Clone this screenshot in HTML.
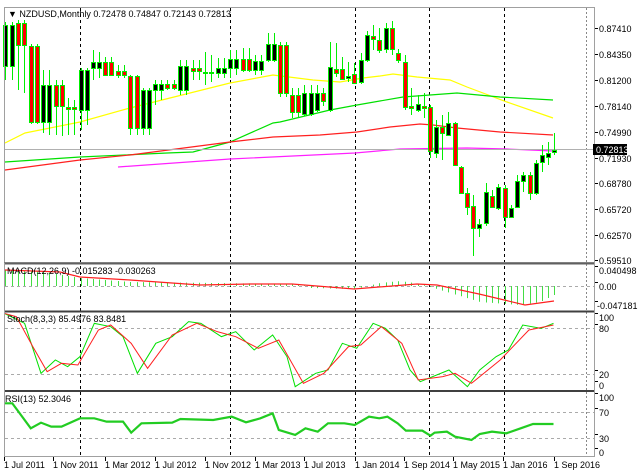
<!DOCTYPE html>
<html><head><meta charset="utf-8"><style>
html,body{margin:0;padding:0;background:#fff;width:643px;height:472px;overflow:hidden}
svg{display:block;font-family:"Liberation Sans",sans-serif}
</style></head><body>
<svg id="s" width="643" height="472" xmlns="http://www.w3.org/2000/svg">
<rect width="643" height="472" fill="#fff"/>
<!-- dashed vertical grid -->
<g stroke="#000" stroke-dasharray="3,3" stroke-width="1">
<line x1="80.5" y1="8" x2="80.5" y2="456"/><line x1="230.5" y1="8" x2="230.5" y2="456"/>
<line x1="355.5" y1="8" x2="355.5" y2="456"/><line x1="429.5" y1="8" x2="429.5" y2="456"/>
<line x1="504.5" y1="8" x2="504.5" y2="456"/>
</g>
<line x1="586.5" y1="8" x2="586.5" y2="456" stroke="#888" stroke-dasharray="2,2"/>
<!-- gray dashed horizontals in oscillators -->
<g stroke="#aaa" stroke-dasharray="3,3">
<line x1="5" y1="286.5" x2="595" y2="286.5"/>
<line x1="5" y1="328.5" x2="595" y2="328.5"/><line x1="5" y1="374.5" x2="595" y2="374.5"/>
<line x1="5" y1="412.5" x2="595" y2="412.5"/><line x1="5" y1="438.5" x2="595" y2="438.5"/>
</g>
<!-- MAs -->
<g fill="none" stroke-width="1.2">
<polyline stroke="#ffff00" points="5,143 25,133 80,122 130,108 230,83 273,75 313,80 340,82 363,78 380,76 393,74 417,77 450,80 467,87 507,102 553,118"/>
<polyline stroke="#00e000" points="5,162 80,157 167,153 193,152 230,142 273,123 280,122 330,110 357,105 403,97 430,95 457,93 500,97 553,100"/>
<polyline stroke="#ff2020" points="5,170 80,160 130,155 230,142 273,137 320,135 357,132 390,127 420,124 433,125 457,128 500,132 553,135"/>
<polyline stroke="#ff20ff" points="118,167 230,159 355,153 400,149 467,148 507,149 553,151"/>
</g>
<line x1="5" y1="149.5" x2="595" y2="149.5" stroke="#b0b0b0"/>
<g id="candles"></g>
<g id="hist" stroke="#44dd44" stroke-width="1"></g>
<polyline fill="none" stroke="#ff2020" stroke-width="1.2" points="5,270 60,272 80,277 130,280 200,285 250,284 292,284 354,289 417,284 437,285 479,294 525,305 554,301"/>
<!-- stoch -->
<g transform="translate(0,260) scale(0.41,0.3333)" fill="none">
<polyline vector-effect="non-scaling-stroke" stroke="#00e000" stroke-width="1" points="10,160 60,190 100,340 135,300 165,320 195,290 230,190 270,200 300,230 335,340 380,250 420,230 460,185 490,190 540,230 575,215 620,270 665,225 700,290 720,380 770,340 800,330 835,250 870,265 910,190 940,205 970,240 1000,330 1025,365 1095,330 1140,380 1170,330 1210,290 1240,270 1275,195 1320,205 1350,190"/>
<polyline vector-effect="non-scaling-stroke" stroke="#ff2020" stroke-width="1" points="10,160 40,170 80,260 115,335 150,310 190,315 240,210 270,195 320,250 360,325 420,225 480,190 530,215 575,230 630,265 680,240 740,370 790,340 850,260 880,255 930,200 980,250 1020,360 1080,350 1110,340 1150,370 1220,300 1290,210 1350,195"/>
<polyline vector-effect="non-scaling-stroke" stroke="#22cc22" stroke-width="2.2" points="10,430 30,430 45,455 75,505 100,488 125,500 150,500 195,475 230,475 260,485 300,485 320,518 345,490 420,488 440,477 520,480 565,470 600,487 635,475 665,460 680,510 720,525 745,505 775,515 800,490 840,490 865,495 900,470 925,475 945,470 970,490 990,512 1030,512 1050,527 1060,518 1090,515 1110,530 1150,540 1170,522 1200,515 1235,520 1270,505 1300,492 1350,492"/>
</g>
<!-- frames -->
<g fill="none">
<rect x="4.5" y="7.5" width="590" height="255" stroke="#a0a0a0"/>
<line x1="4" y1="263.5" x2="595" y2="263.5" stroke="#606060" stroke-width="2"/>
<line x1="4" y1="311.5" x2="595" y2="311.5" stroke="#404040" stroke-width="2"/>
<line x1="4" y1="391" x2="595" y2="391" stroke="#404040" stroke-width="2"/>
<line x1="4.5" y1="263" x2="4.5" y2="456" stroke="#a0a0a0"/>
<line x1="594.5" y1="7" x2="594.5" y2="456" stroke="#a0a0a0"/>
<line x1="4" y1="456.5" x2="595" y2="456.5" stroke="#a0a0a0"/>
</g>
<rect x="593" y="144" width="34" height="11" fill="#000"/>
<g font-size="9" fill="#000">
<text x="8" y="17">▼ NZDUSD,Monthly  0.72478 0.74847 0.72143 0.72813</text>
<text x="7" y="274">MACD(12,26,9) -0.015283 -0.030263</text>
<text x="7" y="322">Stoch(8,3,3) 85.4976 83.8481</text>
<text x="5" y="402">RSI(13) 52.3046</text>
<g text-anchor="start">
<text x="599" y="32">0.87410</text><text x="599" y="58">0.84350</text><text x="599" y="84">0.81200</text>
<text x="599" y="110">0.78140</text><text x="599" y="136">0.74990</text><text x="599" y="162">0.71930</text>
<text x="599" y="187">0.68780</text><text x="599" y="213">0.65720</text><text x="599" y="239">0.62570</text>
<text x="599" y="264">0.59510</text>
<text x="599" y="274">0.040498</text><text x="599" y="290">0.00</text><text x="597" y="309">-0.047181</text>
<text x="599" y="321">100</text><text x="599" y="332">80</text><text x="599" y="378">20</text><text x="599" y="389">0</text>
<text x="599" y="401">100</text><text x="599" y="416">70</text><text x="599" y="442">30</text><text x="599" y="456">0</text>
</g>
<text x="596" y="153" fill="#fff">0.72813</text>
<g><text x="4" y="468">1 Jul 2011</text><text x="53" y="468">1 Nov 2011</text><text x="105" y="468">1 Mar 2012</text>
<text x="155" y="468">1 Jul 2012</text><text x="205" y="468">1 Nov 2012</text><text x="255" y="468">1 Mar 2013</text>
<text x="304" y="468">1 Jul 2013</text><text x="355" y="468">1 Jan 2014</text><text x="404" y="468">1 Sep 2014</text>
<text x="453" y="468">1 May 2015</text><text x="503" y="468">1 Jan 2016</text><text x="554" y="468">1 Sep 2016</text></g>
</g>
<g stroke="#000" id="ticks"></g>
</svg>
<script>
var C=[[5,25,66,22,80,'k'],[12,25,66,22,80,'k'],[18,23,45,20,90,'r'],[24,23,45,20,93,'r'],[31,46,122,44,124,'r'],[37,46,122,44,124,'r'],[43,85,122,70,133,'k'],[49,85,122,70,135,'k'],[56,85,106,80,135,'r'],[62,85,106,80,136,'r'],[68,107,109,98,135,'r'],[74,107,109,100,135,'r'],[81,70,110,68,130,'k'],[87,70,110,68,125,'k'],[93,62,68,50,80,'k'],[99,62,68,52,78,'k'],[105,62,75,57,75,'r'],[111,62,75,57,76,'r'],[118,71,75,65,78,'r'],[124,71,75,65,78,'r'],[130,76,128,75,135,'r'],[137,76,128,75,135,'r'],[143,90,128,88,135,'k'],[149,90,128,88,135,'k'],[155,84,90,80,105,'k'],[161,84,90,80,100,'k'],[167,84,88,80,90,'r'],[174,84,88,80,90,'r'],[180,66,90,60,95,'k'],[186,66,90,60,95,'k'],[193,68,71,60,80,'r'],[199,68,71,60,80,'r'],[205,72,73,52,85,'r'],[211,72,73,55,82,'r'],[218,68,73,58,78,'k'],[224,68,73,58,78,'k'],[230,59,68,50,78,'k'],[236,59,68,50,75,'k'],[243,59,70,48,72,'r'],[249,59,70,48,72,'r'],[255,61,70,55,75,'k'],[261,61,70,55,75,'k'],[268,44,60,33,62,'k'],[274,44,60,33,62,'k'],[280,45,93,42,97,'r'],[286,45,93,42,97,'r'],[292,95,112,88,118,'r'],[298,95,112,88,118,'r'],[304,93,114,85,116,'k'],[311,93,114,85,116,'k'],[317,93,110,85,112,'k'],[323,93,101,88,106,'r'],[330,67,110,42,112,'k'],[336,69,73,43,77,'r'],[342,69,79,57,80,'r'],[348,76,78,62,82,'k'],[354,74,83,63,84,'r'],[361,60,82,53,84,'k'],[367,35,60,31,62,'k'],[373,36,39,25,50,'r'],[379,40,50,28,53,'r'],[386,28,49,23,53,'k'],[392,28,49,21,55,'r'],[398,53,60,49,63,'r'],[405,62,107,55,110,'r'],[411,106,108,88,115,'r'],[418,104,110,95,112,'k'],[424,106,108,93,118,'r'],[430,107,151,105,158,'r'],[436,127,153,120,158,'k'],[442,127,133,115,160,'r'],[448,123,135,112,136,'k'],[455,123,165,122,166,'r'],[461,167,193,166,194,'r'],[467,193,207,188,215,'r'],[473,206,228,195,256,'r'],[479,224,228,219,237,'k'],[486,192,223,183,226,'k'],[492,196,207,190,208,'r'],[498,187,208,184,210,'k'],[505,188,217,185,228,'r'],[511,208,217,205,218,'k'],[517,181,207,175,208,'k'],[523,175,181,172,192,'k'],[530,175,193,172,200,'r'],[536,163,193,160,195,'k'],[542,155,162,145,172,'k'],[548,153,157,142,165,'k'],[554,150,152,133,155,'k']];
var ns='http://www.w3.org/2000/svg',g=document.getElementById('candles'),h=document.getElementById('hist'),tk=document.getElementById('ticks');
function el(p,t,a){var e=document.createElementNS(ns,t);for(var k in a)e.setAttribute(k,a[k]);p.appendChild(e);return e;}
C.forEach(function(c){
 el(g,'line',{x1:c[0]+.5,x2:c[0]+.5,y1:c[3],y2:c[4],stroke:'#00ee00'});
 el(g,'rect',{x:c[0]-1.5,y:c[1]+.5,width:4,height:Math.max(1,c[2]-c[1]),fill:c[5]=='k'?'#000':'#ff0000',stroke:'#00ee00','stroke-width':1});
});
var P=[[5,-16],[40,-15],[80,-8],[130,-4],[300,-2],[310,2],[355,3],[380,-3],[400,-5],[420,-2],[440,4],[480,16],[520,19],[540,16],[554,9]];
function f(x){for(var i=0;i<P.length-1;i++){if(x<=P[i+1][0]){var t=(x-P[i][0])/(P[i+1][0]-P[i][0]);return P[i][1]+t*(P[i+1][1]-P[i][1]);}}return P[P.length-1][1];}
C.forEach(function(c){var v=f(c[0]);el(h,'line',{x1:c[0]+.5,x2:c[0]+.5,y1:286,y2:286+v});});
[32,58,84,110,136,162,187,213,239,264,270,286,305,317,328,374,385,397,412,438,452].forEach(function(y){el(tk,'line',{x1:595,x2:598,y1:y-3.5,y2:y-3.5});});
[4,53,105,155,205,255,304,355,404,453,503,554].forEach(function(x){el(tk,'line',{x1:x+.5,x2:x+.5,y1:457,y2:461});});
</script>
</body></html>
